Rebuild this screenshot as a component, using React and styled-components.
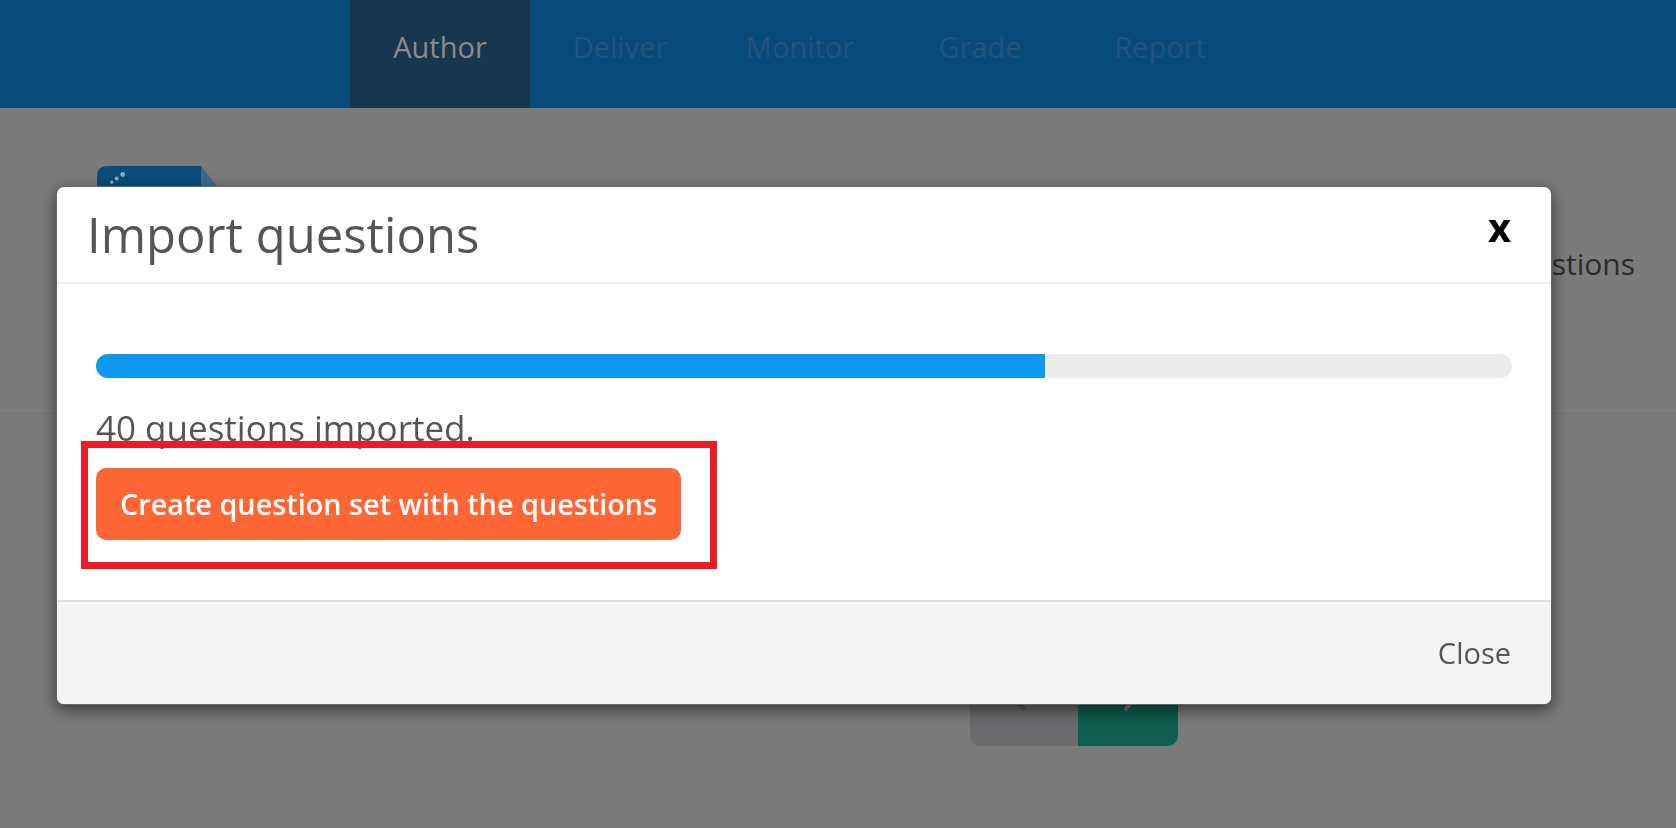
import React from "react";
import styled, { createGlobalStyle } from "styled-components";

const Global = createGlobalStyle`
  html, body {
    margin: 0;
    padding: 0;
    background: #7b7b7b;
    font-family: "Open Sans", "Noto Sans", sans-serif;
  }
  * { box-sizing: border-box; }
`;

const Page = styled.div`
  width: 1676px;
  height: 828px;
  background: #7b7b7b;
  overflow: hidden;
`;

const Header = styled.header`
  height: 108px;
  background: #074b7a;
  display: flex;
  padding-left: 350px;
`;

const Tab = styled.div`
  width: 180px;
  height: 108px;
  display: flex;
  justify-content: center;
  padding-top: 27px;
  font-size: 29px;
  line-height: 1.362;
  color: ${(p) => (p.$active ? "#8c8c8c" : "#21557b")};
  background: ${(p) => (p.$active ? "#17374e" : "transparent")};
`;

const TopRow = styled.div`
  height: 302px;
  display: flex;
  justify-content: space-between;
  align-items: flex-start;
  padding: 58px 41px 0 97px;
`;

const Logo = styled.svg`
  display: block;
`;

const BgAction = styled.div`
  margin-top: 78px;
  font-size: 30px;
  line-height: 1.362;
  color: #2b2b2b;
`;

const Divider = styled.div`
  height: 1px;
  background: #838383;
`;

const Pager = styled.div`
  display: flex;
  margin: 279px 0 0 970px;
  height: 56px;
`;

const PagerBtn = styled.div`
  width: ${(p) => p.$w}px;
  height: 56px;
  display: flex;
  align-items: flex-start;
  justify-content: center;
  padding-top: 6px;
  background: ${(p) => p.$bg};
  border-radius: ${(p) => p.$radius};
`;

const Backdrop = styled.div`
  position: fixed;
  inset: 0;
  padding: 186px 0 0 56px;
`;

const Modal = styled.div`
  width: 1496px;
  background: #fff;
  border: 1px solid rgba(0, 0, 0, 0.6);
  border-radius: 8px;
  box-shadow: 0 5px 16px rgba(0, 0, 0, 0.55);
  overflow: hidden;
`;

const ModalHeader = styled.div`
  height: 97px;
  display: flex;
  align-items: center;
  justify-content: space-between;
  padding: 0 40px 0 30px;
  border-bottom: 2px solid #ececec;
`;

const Title = styled.h1`
  margin: 0;
  font-size: 49px;
  font-weight: 400;
  line-height: 1;
  color: #555;
`;

const CloseX = styled.button`
  border: 0;
  background: none;
  padding: 0;
  margin-bottom: 16px;
  font-family: inherit;
  font-size: 40px;
  font-weight: 700;
  line-height: 1;
  color: #000;
  cursor: pointer;
`;

const ModalBody = styled.div`
  position: relative;
  padding: 70px 39px 60px 39px;
`;

const Progress = styled.div`
  height: 24px;
  border-radius: 12px;
  background: #eaebed;
  overflow: hidden;
`;

const ProgressFill = styled.div`
  height: 100%;
  background: #0f98ef;
`;

const Status = styled.p`
  margin: 26px 0 16px;
  font-size: 35px;
  line-height: 1.362;
  color: #555;
`;

const PrimaryButton = styled.button`
  height: 72px;
  padding: 0 24px;
  border: 0;
  border-radius: 10px;
  background: #fe6735;
  color: #fff;
  font-family: inherit;
  font-size: 28.8px;
  font-weight: 600;
  cursor: pointer;
`;

const Highlight = styled.div`
  position: absolute;
  left: 24px;
  top: 157px;
  width: 636px;
  height: 128px;
  border: 7.5px solid #ec1c24;
  pointer-events: none;
`;

const ModalFooter = styled.div`
  height: 104px;
  display: flex;
  align-items: center;
  justify-content: flex-end;
  padding: 0 40px 0 40px;
  background: #f4f4f4;
  border-top: 2px solid #dcdcdc;
`;

const FooterLink = styled.button`
  border: 0;
  background: none;
  padding: 0;
  font-family: inherit;
  font-size: 29px;
  color: #555;
  cursor: pointer;
`;

const tabs = ["Author", "Deliver", "Monitor", "Grade", "Report"];

export default function App() {
  const progress = 67;
  return (
    <>
      <Global />
      <Page>
        <Header>
          {tabs.map((t, i) => (
            <Tab key={t} $active={i === 0}>
              {t}
            </Tab>
          ))}
        </Header>
        <TopRow>
          <Logo width="130" height="70" viewBox="0 0 130 70">
            <path d="M0 10 Q0 0 10 0 H104 V70 H0 Z" fill="#0b4c7c" />
            <path d="M104 0 L120 20 V70 H104 Z" fill="#3a6a8f" />
            <circle cx="25.7" cy="8.5" r="2.4" fill="#8ea7bd" />
            <circle cx="19.7" cy="12.5" r="2" fill="#8ea7bd" />
            <circle cx="14.7" cy="16.3" r="1.7" fill="#8ea7bd" />
          </Logo>
          <BgAction>Import questions</BgAction>
        </TopRow>
        <Divider />
        <Pager>
          <PagerBtn $w={108} $bg="#6a6b6d" $radius="10px 0 0 10px">
            <svg width="30" height="22" viewBox="0 0 30 22">
              <path d="M4 0 L16 14" stroke="#555" strokeWidth="4" fill="none" />
            </svg>
          </PagerBtn>
          <PagerBtn $w={100} $bg="#0f5e4f" $radius="0 10px 10px 0">
            <svg width="30" height="22" viewBox="0 0 30 22">
              <path d="M24 0 L12 14" stroke="#7a7a7a" strokeWidth="4" fill="none" />
            </svg>
          </PagerBtn>
        </Pager>
      </Page>
      <Backdrop>
        <Modal>
          <ModalHeader>
            <Title>Import questions</Title>
            <CloseX>x</CloseX>
          </ModalHeader>
          <ModalBody>
            <Progress>
              <ProgressFill style={{ width: `${progress}%` }} />
            </Progress>
            <Status>40 questions imported.</Status>
            <PrimaryButton>Create question set with the questions</PrimaryButton>
            <Highlight />
          </ModalBody>
          <ModalFooter>
            <FooterLink>Close</FooterLink>
          </ModalFooter>
        </Modal>
      </Backdrop>
    </>
  );
}
